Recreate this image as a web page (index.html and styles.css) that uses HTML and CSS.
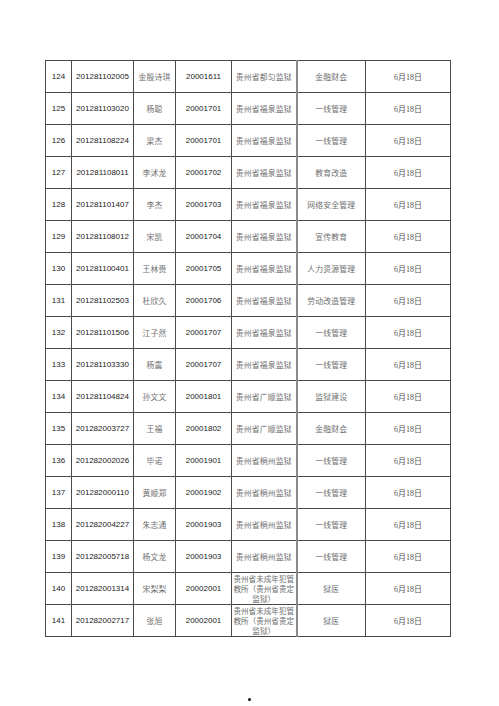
FILE: index.html
```html
<!DOCTYPE html>
<html lang="zh">
<head>
<meta charset="utf-8">
<link rel="stylesheet" href="styles.css">
</head>
<body>
<div class="page">
<table class="list">
<colgroup>
<col class="c1"><col class="c2"><col class="c3"><col class="c4"><col class="c5"><col class="c6"><col class="c7">
</colgroup>
<tbody>
<tr><td class="num">124</td><td class="num">201281102005</td><td class="zh">金殷诗琪</td><td class="num">20001611</td><td class="zh org">贵州省都匀监狱</td><td class="zh job">金融财会</td><td class="date">6月18日</td></tr>
<tr><td class="num">125</td><td class="num">201281103020</td><td class="zh">杨聪</td><td class="num">20001701</td><td class="zh org">贵州省福泉监狱</td><td class="zh job">一线管理</td><td class="date">6月18日</td></tr>
<tr><td class="num">126</td><td class="num">201281108224</td><td class="zh">梁杰</td><td class="num">20001701</td><td class="zh org">贵州省福泉监狱</td><td class="zh job">一线管理</td><td class="date">6月18日</td></tr>
<tr><td class="num">127</td><td class="num">201281108011</td><td class="zh">李沭龙</td><td class="num">20001702</td><td class="zh org">贵州省福泉监狱</td><td class="zh job">教育改造</td><td class="date">6月18日</td></tr>
<tr><td class="num">128</td><td class="num">201281101407</td><td class="zh">李杰</td><td class="num">20001703</td><td class="zh org">贵州省福泉监狱</td><td class="zh job">网络安全管理</td><td class="date">6月18日</td></tr>
<tr><td class="num">129</td><td class="num">201281108012</td><td class="zh">宋凯</td><td class="num">20001704</td><td class="zh org">贵州省福泉监狱</td><td class="zh job">宣传教育</td><td class="date">6月18日</td></tr>
<tr><td class="num">130</td><td class="num">201281100401</td><td class="zh">王林赍</td><td class="num">20001705</td><td class="zh org">贵州省福泉监狱</td><td class="zh job">人力资源管理</td><td class="date">6月18日</td></tr>
<tr><td class="num">131</td><td class="num">201281102503</td><td class="zh">杜欣久</td><td class="num">20001706</td><td class="zh org">贵州省福泉监狱</td><td class="zh job">劳动改造管理</td><td class="date">6月18日</td></tr>
<tr><td class="num">132</td><td class="num">201281101506</td><td class="zh">江子然</td><td class="num">20001707</td><td class="zh org">贵州省福泉监狱</td><td class="zh job">一线管理</td><td class="date">6月18日</td></tr>
<tr><td class="num">133</td><td class="num">201281103330</td><td class="zh">杨震</td><td class="num">20001707</td><td class="zh org">贵州省福泉监狱</td><td class="zh job">一线管理</td><td class="date">6月18日</td></tr>
<tr><td class="num">134</td><td class="num">201281104824</td><td class="zh">孙文文</td><td class="num">20001801</td><td class="zh org">贵州省广顺监狱</td><td class="zh job">监狱建设</td><td class="date">6月18日</td></tr>
<tr><td class="num">135</td><td class="num">201282003727</td><td class="zh">王福</td><td class="num">20001802</td><td class="zh org">贵州省广顺监狱</td><td class="zh job">金融财会</td><td class="date">6月18日</td></tr>
<tr><td class="num">136</td><td class="num">201282002026</td><td class="zh">毕诺</td><td class="num">20001901</td><td class="zh org">贵州省桐州监狱</td><td class="zh job">一线管理</td><td class="date">6月18日</td></tr>
<tr><td class="num">137</td><td class="num">201282000110</td><td class="zh">黄顺郑</td><td class="num">20001902</td><td class="zh org">贵州省桐州监狱</td><td class="zh job">一线管理</td><td class="date">6月18日</td></tr>
<tr><td class="num">138</td><td class="num">201282004227</td><td class="zh">朱志通</td><td class="num">20001903</td><td class="zh org">贵州省桐州监狱</td><td class="zh job">一线管理</td><td class="date">6月18日</td></tr>
<tr><td class="num">139</td><td class="num">201282005718</td><td class="zh">杨文龙</td><td class="num">20001903</td><td class="zh org">贵州省桐州监狱</td><td class="zh job">一线管理</td><td class="date">6月18日</td></tr>
<tr><td class="num">140</td><td class="num">201282001314</td><td class="zh">宋梨梨</td><td class="num">20002001</td><td class="zh org multi">贵州省未成年犯管<br>教所（贵州省贵定<br>监狱）</td><td class="zh job">狱医</td><td class="date">6月18日</td></tr>
<tr><td class="num">141</td><td class="num">201282002717</td><td class="zh">张旭</td><td class="num">20002001</td><td class="zh org multi">贵州省未成年犯管<br>教所（贵州省贵定<br>监狱）</td><td class="zh job">狱医</td><td class="date">6月18日</td></tr>
</tbody>
</table>
<div class="dot-row"><span class="dot"></span></div>
</div>
</body>
</html>
```
FILE: styles.css
```css
html, body {
  margin: 0;
  padding: 0;
  background: #fff;
}
.page {
  width: 499px;
  height: 706px;
  padding: 60px 0 0 45px;
  box-sizing: border-box;
  overflow: hidden;
}
.list {
  border-collapse: collapse;
  table-layout: fixed;
  width: 405px;
}
.c1 { width: 26px; }
.c2 { width: 62px; }
.c3 { width: 42px; }
.c4 { width: 56px; }
.c5 { width: 65px; }
.c6 { width: 69px; }
.c7 { width: 85px; }
.list td {
  border: 1px solid #4a4a4a;
  height: 31px;
  padding: 0;
  text-align: center;
  vertical-align: middle;
  white-space: nowrap;
  overflow: hidden;
}
.list td.org {
  border-right: 2px solid #8a8a8a;
}
.num {
  font-family: "Liberation Sans", Arial, sans-serif;
  font-size: 8px;
  color: #222;
}
.zh {
  font-family: "Noto Sans CJK SC", sans-serif;
  font-size: 7.8px;
  letter-spacing: 0.2px;
  color: #707070;
  font-weight: 400;
}
.multi {
  font-size: 7.6px;
  letter-spacing: 0;
  line-height: 10px;
  white-space: normal;
}
.date {
  font-family: "Liberation Serif", "Noto Sans CJK SC", serif;
  font-size: 8px;
  color: #555;
}
.dot-row {
  display: flex;
  justify-content: center;
  width: 405px;
  padding-top: 61px;
}
.dot {
  display: block;
  width: 3px;
  height: 3px;
  border-radius: 50%;
  background: #111;
  margin-left: 3px;
}
```
